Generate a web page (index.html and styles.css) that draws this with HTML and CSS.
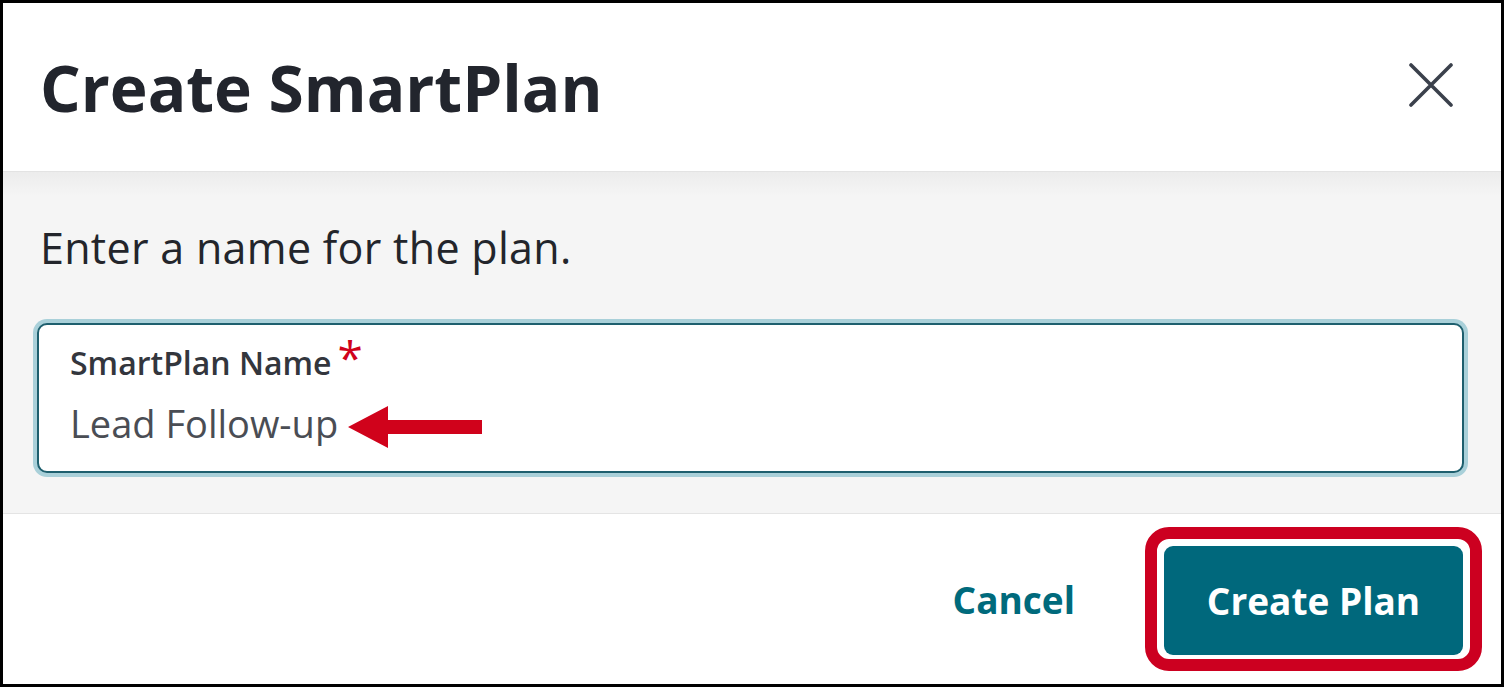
FILE: index.html
```html
<!DOCTYPE html>
<html lang="en">
<head>
    <meta charset="UTF-8">
    <meta name="viewport" content="width=device-width, initial-scale=1.0">
    <title>Create SmartPlan</title>
    <link rel="stylesheet" href="styles.css">
</head>
<body>
    <div class="dialog">
        <header class="dialog-header">
            <h1>Create SmartPlan</h1>
            <button type="button" class="btn-close" aria-label="Close">
                <svg width="44" height="44" viewBox="0 0 44 44">
                    <path d="M2 2 L42 42 M42 2 L2 42" stroke="#3b414c" stroke-width="3.6" stroke-linecap="round" fill="none"/>
                </svg>
            </button>
        </header>
        <main class="dialog-body">
            <p class="prompt">Enter a name for the plan.</p>
            <div class="field">
                <label for="plan-name">SmartPlan Name<span class="required">*</span></label>
                <div class="value-row">
                    <input type="text" id="plan-name" value="Lead Follow-up">
                    <svg class="callout-arrow" width="134" height="42" viewBox="0 0 134 42">
                        <polygon points="0,21 40,0 40,14 134,14 134,28 40,28 40,42" fill="#d0021b"/>
                    </svg>
                </div>
            </div>
        </main>
        <footer class="dialog-footer">
            <button type="button" class="btn-cancel">Cancel</button>
            <div class="highlight">
                <button type="button" class="btn-create">Create Plan</button>
            </div>
        </footer>
    </div>
</body>
</html>
```

FILE: styles.css
```css
* {
    box-sizing: border-box;
}

body {
    margin: 0;
    font-family: 'Open Sans', 'Noto Sans', sans-serif;
    background: #fff;
}

.dialog {
    width: 1504px;
    height: 687px;
    border: 3px solid #000;
    display: flex;
    flex-direction: column;
}

.dialog-header {
    height: 169px;
    padding: 0 48px 0 37px;
    display: flex;
    align-items: center;
    justify-content: space-between;
    border-bottom: 1px solid #e3e3e3;
}

    .dialog-header h1 {
        margin: 2px 0 0;
        font-size: 64px;
        line-height: 1.2;
        font-weight: 700;
        color: #22252d;
    }

.btn-close {
    margin-bottom: 4px;
    padding: 0;
    border: none;
    background: none;
    display: flex;
    cursor: pointer;
}

.dialog-body {
    height: 342px;
    padding: 51px 37px 0 34px;
    background: linear-gradient(#ececec, #f5f5f5 24px);
    border-bottom: 1px solid #e4e4e4;
}

.prompt {
    margin: 0 0 50px 3px;
    font-size: 43px;
    line-height: 50px;
    font-weight: 500;
    letter-spacing: 0.3px;
    color: #23252b;
}

.field {
    height: 150px;
    padding: 19px 31px 0;
    background: #fff;
    border: 2px solid #1e5f6e;
    border-radius: 10px;
    box-shadow: 0 0 0 4px #a9d0d9;
}

    .field label {
        display: block;
        font-size: 32px;
        line-height: 38px;
        font-weight: 600;
        color: #33363d;
    }

.required {
    margin-left: 6px;
    color: #d0021b;
    font-size: 46px;
    font-weight: 400;
    line-height: 0;
}

.value-row {
    display: flex;
    align-items: center;
    margin-top: 16px;
}

    .value-row input {
        width: 278px;
        height: 46px;
        padding: 0;
        border: none;
        outline: none;
        background: none;
        font-family: inherit;
        font-size: 38px;
        line-height: 46px;
        color: #4a4d54;
    }

.callout-arrow {
    margin-top: 8px;
}

.dialog-footer {
    flex: 1;
    display: flex;
    align-items: center;
    justify-content: flex-end;
    padding: 0 19px 0 0;
}

.btn-cancel {
    margin-right: 70px;
    padding: 0;
    border: none;
    background: none;
    font-family: inherit;
    font-size: 37px;
    font-weight: 700;
    color: #006a7c;
    cursor: pointer;
}

.highlight {
    padding: 7px 7px 4px;
    border: 12px solid #cc0020;
    border-radius: 24px;
}

.btn-create {
    width: 299px;
    height: 109px;
    border: none;
    border-radius: 9px;
    background: #00687c;
    font-family: inherit;
    font-size: 37px;
    font-weight: 700;
    color: #fff;
    cursor: pointer;
}
```
